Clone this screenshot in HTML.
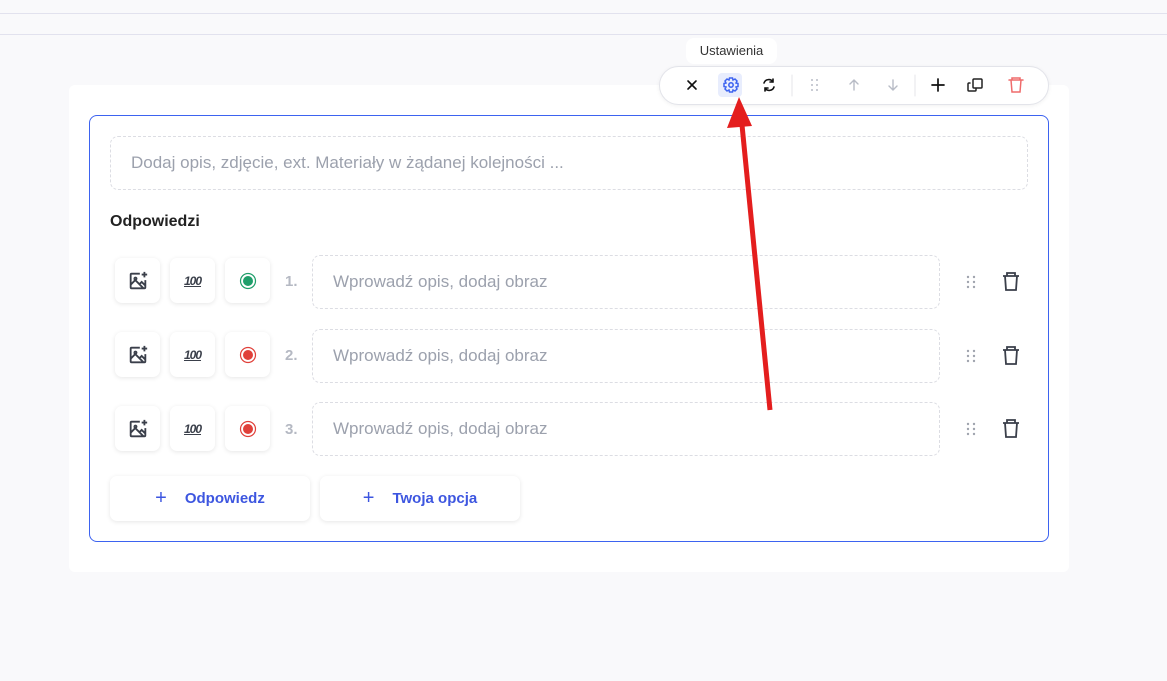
<!DOCTYPE html><html><head><style>
body{margin:0;width:1167px;height:681px;background:#f9f9fb;font-family:"Liberation Sans",sans-serif;position:relative;overflow:hidden}
.a{position:absolute}
.card{left:69px;top:85px;width:1000px;height:487px;background:#fff;border-radius:6px}
.inner{left:89px;top:115px;width:958px;height:425px;border:1px solid #3d63f0;border-radius:8px}
.dash{border:1px dashed #dcdde3;border-radius:8px;color:#9ca1ad;font-size:17px;box-sizing:border-box;display:flex;align-items:center}
.sq{width:45px;height:45px;background:#fff;border-radius:7px;box-shadow:0 1px 5px rgba(0,0,0,.1);display:flex;align-items:center;justify-content:center}
.num{color:#b5b9c3;font-size:15px;font-weight:bold}
.btn{height:45px;width:200px;background:#fff;border-radius:7px;box-shadow:0 1px 5px rgba(0,0,0,.1);color:#3d56e0;font-weight:bold;font-size:15px;display:flex;align-items:center;justify-content:center;gap:18px}
.tb{left:659px;top:66px;width:388px;height:37px;background:#fff;border:1px solid #e3e4ea;border-radius:20px;box-shadow:0 1px 4px rgba(0,0,0,.06)}
.h{font-size:12px;font-style:italic;font-weight:bold;color:#3a3f4a;text-decoration:underline;letter-spacing:-1px}
</style></head><body>
<div class="a" style="left:0;top:13px;width:1167px;height:1px;background:#e2e2ee"></div>
<div class="a" style="left:0;top:34px;width:1167px;height:1px;background:#e2e2ee"></div>
<div class="a card"></div>
<div class="a inner"></div>
<div class="a dash" style="left:110px;top:136px;width:918px;height:54px;padding-left:20px">Dodaj opis, zdjęcie, ext. Materiały w żądanej kolejności ...</div>
<div class="a" style="left:110px;top:213px;font-size:16px;font-weight:bold;color:#222">Odpowiedzi</div>

<div class="a sq" style="left:115px;top:258px"><svg width="22" height="22" viewBox="0 0 24 24" fill="none" stroke="#3a3f4a" stroke-width="2"><path d="M14 4H5a1 1 0 0 0-1 1v14a1 1 0 0 0 1 1h14a1 1 0 0 0 1-1v-8M4 16l5-5 9 9M8 9.5a1.2 1.2 0 1 0 0-.1M14 15l2-2 4 4M19 2v6M16 5h6"/></svg></div>
<div class="a sq h" style="left:170px;top:258px">100</div>
<div class="a sq" style="left:225px;top:258px"><svg width="18" height="18"><circle cx="9" cy="9" r="7.5" fill="none" stroke="#1f9e6a" stroke-width="1.2"/><circle cx="9" cy="9" r="5" fill="#1f9e6a"/></svg></div>
<div class="a num" style="left:285px;top:273px">1.</div>
<div class="a dash" style="left:312px;top:255px;width:628px;height:54px;padding-left:20px">Wprowadź opis, dodaj obraz</div>

<div class="a sq" style="left:115px;top:332px"><svg width="22" height="22" viewBox="0 0 24 24" fill="none" stroke="#3a3f4a" stroke-width="2"><path d="M14 4H5a1 1 0 0 0-1 1v14a1 1 0 0 0 1 1h14a1 1 0 0 0 1-1v-8M4 16l5-5 9 9M8 9.5a1.2 1.2 0 1 0 0-.1M14 15l2-2 4 4M19 2v6M16 5h6"/></svg></div>
<div class="a sq h" style="left:170px;top:332px">100</div>
<div class="a sq" style="left:225px;top:332px"><svg width="18" height="18"><circle cx="9" cy="9" r="7.5" fill="none" stroke="#e0403a" stroke-width="1.2"/><circle cx="9" cy="9" r="5" fill="#e0403a"/></svg></div>
<div class="a num" style="left:285px;top:347px">2.</div>
<div class="a dash" style="left:312px;top:329px;width:628px;height:54px;padding-left:20px">Wprowadź opis, dodaj obraz</div>

<div class="a sq" style="left:115px;top:406px"><svg width="22" height="22" viewBox="0 0 24 24" fill="none" stroke="#3a3f4a" stroke-width="2"><path d="M14 4H5a1 1 0 0 0-1 1v14a1 1 0 0 0 1 1h14a1 1 0 0 0 1-1v-8M4 16l5-5 9 9M8 9.5a1.2 1.2 0 1 0 0-.1M14 15l2-2 4 4M19 2v6M16 5h6"/></svg></div>
<div class="a sq h" style="left:170px;top:406px">100</div>
<div class="a sq" style="left:225px;top:406px"><svg width="18" height="18"><circle cx="9" cy="9" r="7.5" fill="none" stroke="#e0403a" stroke-width="1.2"/><circle cx="9" cy="9" r="5" fill="#e0403a"/></svg></div>
<div class="a num" style="left:285px;top:421px">3.</div>
<div class="a dash" style="left:312px;top:402px;width:628px;height:54px;padding-left:20px">Wprowadź opis, dodaj obraz</div>

<svg class="a" style="left:960px;top:265px" width="65" height="180" fill="none">
<g fill="#a0a4ae"><circle cx="8" cy="12" r="1.2"/><circle cx="14" cy="12" r="1.2"/><circle cx="8" cy="17" r="1.2"/><circle cx="14" cy="17" r="1.2"/><circle cx="8" cy="22" r="1.2"/><circle cx="14" cy="22" r="1.2"/>
<circle cx="8" cy="86" r="1.2"/><circle cx="14" cy="86" r="1.2"/><circle cx="8" cy="91" r="1.2"/><circle cx="14" cy="91" r="1.2"/><circle cx="8" cy="96" r="1.2"/><circle cx="14" cy="96" r="1.2"/>
<circle cx="8" cy="159" r="1.2"/><circle cx="14" cy="159" r="1.2"/><circle cx="8" cy="164" r="1.2"/><circle cx="14" cy="164" r="1.2"/><circle cx="8" cy="169" r="1.2"/><circle cx="14" cy="169" r="1.2"/></g>
<g stroke="#3a3f4a" stroke-width="1.8"><path d="M43 11h16M47 11V8h8v3M45 11l1 14h10l1-14"/><path d="M43 85h16M47 85v-3h8v3M45 85l1 14h10l1-14"/><path d="M43 158h16M47 158v-3h8v3M45 158l1 14h10l1-14"/></g>
</svg>

<div class="a btn" style="left:110px;top:476px"><span style="font-size:20px;font-weight:normal">+</span>Odpowiedz</div>
<div class="a btn" style="left:320px;top:476px"><span style="font-size:20px;font-weight:normal">+</span>Twoja opcja</div>

<div class="a" style="left:686px;top:38px;width:91px;height:26px;background:#fff;border-radius:8px;font-size:13px;color:#333;text-align:center;line-height:25px">Ustawienia</div>
<div class="a tb"></div>
<div class="a" style="left:718px;top:73px;width:24px;height:24px;background:#e8edfd;border-radius:4px"></div>
<svg class="a" style="left:659px;top:66px" width="390" height="38" fill="none" stroke-linecap="round">
<path d="M29 15l8 8M37 15l-8 8" stroke="#111" stroke-width="1.6"/>
<g transform="translate(72 19)" stroke="#3d63f0" stroke-width="1.5"><circle r="2.2"/><path d="M-1.5-7h3l.5 2 2-1 2 2-1 2 2 .5v3l-2 .5 1 2-2 2-2-1-.5 2h-3l-.5-2-2 1-2-2 1-2-2-.5v-3l2-.5-1-2 2-2 2 1z"/></g>
<path d="M105 17a5 5 0 0 1 9-1M114 13v3h-3M115 21a5 5 0 0 1-9 1M106 25v-3h3" stroke="#111" stroke-width="1.6"/>
<line x1="133" y1="9" x2="133" y2="30" stroke="#e5e6ea"/>
<g fill="#b8bcc6" stroke="none"><circle cx="153" cy="14" r="1"/><circle cx="158" cy="14" r="1"/><circle cx="153" cy="19" r="1"/><circle cx="158" cy="19" r="1"/><circle cx="153" cy="24" r="1"/><circle cx="158" cy="24" r="1"/></g>
<path d="M195 24v-10M191 18l4-4 4 4M234 14v10M230 20l4 4 4-4" stroke="#b8bcc6" stroke-width="1.4"/>
<line x1="256" y1="9" x2="256" y2="30" stroke="#e5e6ea"/>
<path d="M279 13v12M273 19h12" stroke="#111" stroke-width="1.7"/>
<path d="M311 17h-1a1 1 0 0 0-1 1v6a1 1 0 0 0 1 1h6a1 1 0 0 0 1-1v-1M315 13h7a1 1 0 0 1 1 1v7a1 1 0 0 1-1 1h-7a1 1 0 0 1-1-1v-7a1 1 0 0 1 1-1z" stroke="#222" stroke-width="1.5"/>
<path d="M350 14h14M353 14v-2h8v2M352 14l1 12h8l1-12" stroke="#ef6b6b" stroke-width="1.5"/>
</svg>

<svg class="a" style="left:0;top:0" width="1167" height="681">
<line x1="770" y1="410" x2="742" y2="125" stroke="#e41e1e" stroke-width="5"/>
<polygon points="739,97 727,128 752,126" fill="#e41e1e"/>
</svg>
</body></html>
